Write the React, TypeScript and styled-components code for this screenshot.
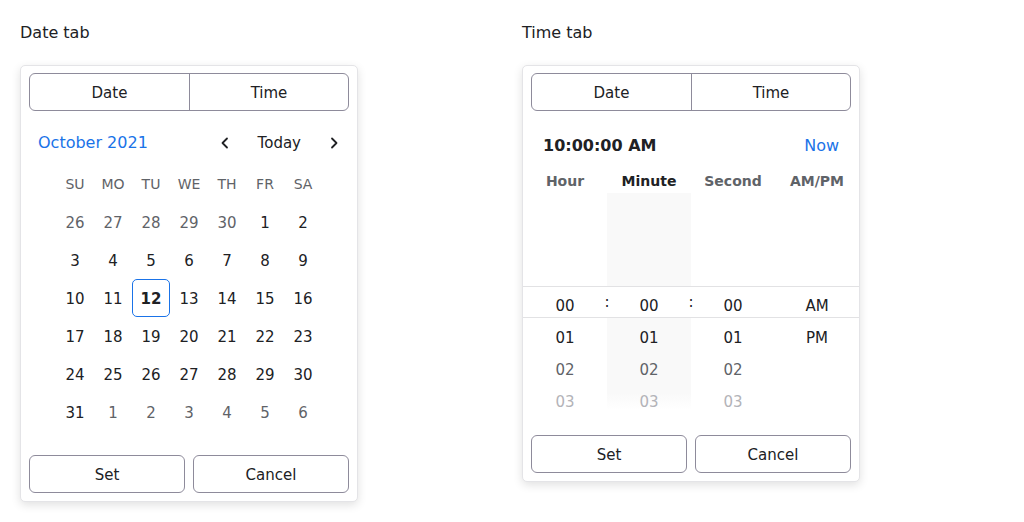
import React from "react";
import styled, { createGlobalStyle } from "styled-components";

const GlobalStyle = createGlobalStyle`
  body {
    margin: 0;
    background: #ffffff;
    font-family: "DejaVu Sans", "Noto Sans", sans-serif;
    color: #202124;
  }
  button {
    cursor: pointer;
  }
`;

const Page = styled.div`
  display: flex;
  align-items: flex-start;
  gap: 164px;
  padding: 21px 20px 20px;
`;

const Section = styled.section`
  width: 338px;
  display: flex;
  flex-direction: column;
`;

const Caption = styled.div`
  font-size: 16px;
  line-height: 24px;
  margin-bottom: 20px;
`;

const Card = styled.div`
  background: #ffffff;
  border: 1px solid #e4e4e7;
  border-radius: 5px;
  box-shadow: 0 3px 10px rgba(0, 0, 0, 0.12);
`;

const Tabs = styled.div`
  display: grid;
  grid-template-columns: 1fr 1fr;
  height: 38px;
  margin: 7px 8px 0;
  border: 1px solid #8e8b9b;
  border-radius: 6px;
  box-sizing: border-box;
  overflow: hidden;
`;

const Tab = styled.button`
  border: none;
  background: transparent;
  font: inherit;
  font-size: 15px;
  color: #202124;
  padding: 2px 0 0;
  & + & {
    border-left: 1px solid #8e8b9b;
  }
`;

const MonthHeader = styled.div`
  display: flex;
  align-items: center;
  justify-content: space-between;
  height: 38px;
  margin: 12px 8px 0;
  padding: 1px 0 0 9px;
  box-sizing: border-box;
`;

const MonthLabel = styled.div`
  font-size: 16px;
  color: #1a73e8;
`;

const Nav = styled.div`
  display: flex;
  align-items: center;
  gap: 9px;
`;

const NavButton = styled.button`
  display: flex;
  align-items: center;
  justify-content: center;
  width: 30px;
  height: 30px;
  padding: 0;
  border: none;
  background: transparent;
  color: #202124;
`;

const TodayButton = styled.button`
  border: none;
  background: transparent;
  font: inherit;
  font-size: 15px;
  color: #202124;
  padding: 1px 9px 0;
  height: 30px;
`;

const Grid = styled.div`
  display: grid;
  grid-template-columns: repeat(7, 38px);
  grid-auto-rows: 38px;
  width: 266px;
  margin: 4px auto 0;
`;

const WeekDay = styled.div`
  display: flex;
  align-items: center;
  justify-content: center;
  font-size: 14px;
  color: #5f6368;
`;

const Day = styled.div<{ $muted?: boolean; $selected?: boolean }>`
  display: flex;
  align-items: center;
  justify-content: center;
  padding-top: 2px;
  font-size: 15px;
  box-sizing: border-box;
  border-radius: 5px;
  color: ${(p) => (p.$muted ? "#5f6368" : "#202124")};
  font-weight: ${(p) => (p.$selected ? 700 : 400)};
  border: 1px solid ${(p) => (p.$selected ? "#1a73e8" : "transparent")};
`;

const Footer = styled.div<{ $gap: number }>`
  display: grid;
  grid-template-columns: 1fr 1fr;
  gap: 8px;
  margin-top: ${(p) => p.$gap}px;
  padding: 0 8px 8px;
`;

const ActionButton = styled.button`
  height: 38px;
  padding: 2px 0 0;
  border: 1px solid #8e8b9b;
  border-radius: 6px;
  background: #ffffff;
  font: inherit;
  font-size: 15px;
  color: #202124;
`;

const TimeHeader = styled.div`
  display: flex;
  align-items: center;
  justify-content: space-between;
  height: 40px;
  margin: 14px 8px 0;
  padding: 1px 12px 0;
  box-sizing: border-box;
`;

const TimeValue = styled.div`
  font-size: 16px;
  font-weight: 700;
`;

const NowLink = styled.button`
  border: none;
  background: transparent;
  font: inherit;
  font-size: 16px;
  color: #1a73e8;
  padding: 0;
`;

const ColumnHeads = styled.div`
  display: grid;
  grid-template-columns: repeat(4, 84px);
  height: 24px;
  margin-top: 4px;
`;

const ColumnHead = styled.div<{ $active?: boolean }>`
  display: flex;
  align-items: center;
  justify-content: center;
  font-size: 14px;
  font-weight: 700;
  color: ${(p) => (p.$active ? "#202124" : "#5f6368")};
`;

const Wheel = styled.div`
  position: relative;
  display: grid;
  grid-template-columns: repeat(4, 84px);
  height: 224px;
`;

const Band = styled.div`
  position: absolute;
  left: 0;
  right: 0;
  top: 93px;
  height: 32px;
  box-sizing: border-box;
  border-top: 1px solid #e2e2e4;
  border-bottom: 1px solid #e2e2e4;
`;

const Colon = styled.span<{ $left: number }>`
  position: absolute;
  left: ${(p) => p.$left - 5}px;
  top: 7px;
  width: 10px;
  text-align: center;
  font-size: 15px;
  line-height: 16px;
  color: #202124;
`;

const WheelColumn = styled.div<{ $shaded?: boolean }>`
  position: relative;
  z-index: 1;
  display: flex;
  flex-direction: column;
  padding-top: 96px;
  background: ${(p) =>
    p.$shaded
      ? "linear-gradient(to bottom, #f9f9f9 0 93px, transparent 93px 125px, #f9f9f9 125px 200px, transparent 217px)"
      : "transparent"};
`;

const WheelItem = styled.div<{ $tone: number }>`
  height: 32px;
  display: flex;
  align-items: center;
  justify-content: center;
  padding-top: 2px;
  box-sizing: border-box;
  font-size: 15px;
  color: ${(p) => ["#202124", "#202124", "#5f6368", "#b3b3b8"][p.$tone]};
`;

const Chevron = ({ dir }: { dir: "left" | "right" }) => (
  <svg width="10" height="12" viewBox="0 0 10 12" fill="none">
    <path
      d={dir === "left" ? "M7 1.5L2.5 6L7 10.5" : "M3 1.5L7.5 6L3 10.5"}
      stroke="#202124"
      strokeWidth="1.8"
      strokeLinecap="round"
      strokeLinejoin="round"
    />
  </svg>
);

const weekDays = ["SU", "MO", "TU", "WE", "TH", "FR", "SA"];

const days: { n: number; muted: boolean }[] = [
  ...[26, 27, 28, 29, 30].map((n) => ({ n, muted: true })),
  ...Array.from({ length: 31 }, (_, i) => ({ n: i + 1, muted: false })),
  ...[1, 2, 3, 4, 5, 6].map((n) => ({ n, muted: true })),
];

const numbers = ["00", "01", "02", "03"];

function DatePanel() {
  return (
    <Card>
      <Tabs>
        <Tab>Date</Tab>
        <Tab>Time</Tab>
      </Tabs>
      <MonthHeader>
        <MonthLabel>October 2021</MonthLabel>
        <Nav>
          <NavButton>
            <Chevron dir="left" />
          </NavButton>
          <TodayButton>Today</TodayButton>
          <NavButton>
            <Chevron dir="right" />
          </NavButton>
        </Nav>
      </MonthHeader>
      <Grid>
        {weekDays.map((d) => (
          <WeekDay key={d}>{d}</WeekDay>
        ))}
        {days.map((d, i) => (
          <Day key={i} $muted={d.muted} $selected={!d.muted && d.n === 12}>
            {d.n}
          </Day>
        ))}
      </Grid>
      <Footer $gap={24}>
        <ActionButton>Set</ActionButton>
        <ActionButton>Cancel</ActionButton>
      </Footer>
    </Card>
  );
}

function TimePanel() {
  return (
    <Card>
      <Tabs>
        <Tab>Date</Tab>
        <Tab>Time</Tab>
      </Tabs>
      <TimeHeader>
        <TimeValue>10:00:00 AM</TimeValue>
        <NowLink>Now</NowLink>
      </TimeHeader>
      <ColumnHeads>
        <ColumnHead>Hour</ColumnHead>
        <ColumnHead $active>Minute</ColumnHead>
        <ColumnHead>Second</ColumnHead>
        <ColumnHead>AM/PM</ColumnHead>
      </ColumnHeads>
      <Wheel>
        <Band>
          <Colon $left={84}>:</Colon>
          <Colon $left={168}>:</Colon>
        </Band>
        {[false, true, false].map((shaded, c) => (
          <WheelColumn key={c} $shaded={shaded}>
            {numbers.map((n, i) => (
              <WheelItem key={n} $tone={i}>
                {n}
              </WheelItem>
            ))}
          </WheelColumn>
        ))}
        <WheelColumn>
          <WheelItem $tone={0}>AM</WheelItem>
          <WheelItem $tone={1}>PM</WheelItem>
        </WheelColumn>
      </Wheel>
      <Footer $gap={18}>
        <ActionButton>Set</ActionButton>
        <ActionButton>Cancel</ActionButton>
      </Footer>
    </Card>
  );
}

export default function App() {
  return (
    <>
      <GlobalStyle />
      <Page>
        <Section>
          <Caption>Date tab</Caption>
          <DatePanel />
        </Section>
        <Section>
          <Caption>Time tab</Caption>
          <TimePanel />
        </Section>
      </Page>
    </>
  );
}
